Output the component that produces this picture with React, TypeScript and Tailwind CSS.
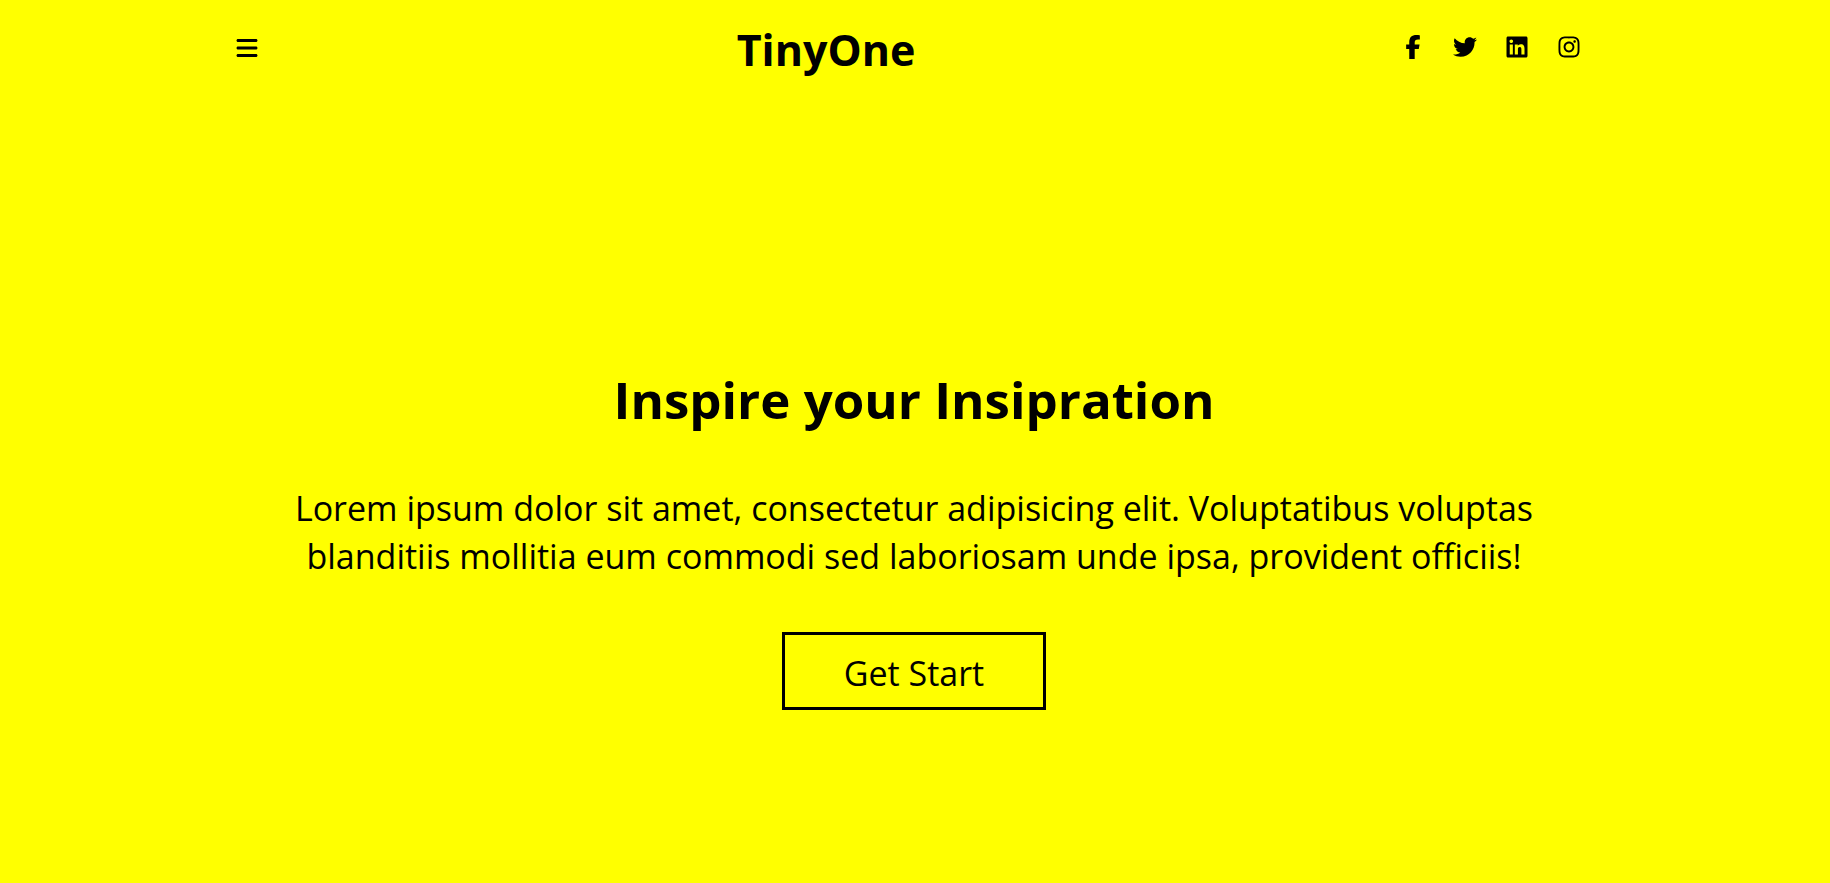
import { FaBars, FaFacebookF, FaTwitter, FaLinkedin, FaInstagram } from "react-icons/fa6";

const socials = [
  { label: "Facebook", Icon: FaFacebookF },
  { label: "Twitter", Icon: FaTwitter },
  { label: "LinkedIn", Icon: FaLinkedin },
  { label: "Instagram", Icon: FaInstagram },
];

export default function App() {
  return (
    <div className="flex min-h-screen flex-col bg-[#ffff00] font-['Open_Sans','Noto_Sans',sans-serif] text-black">
      <header className="mx-auto flex w-3/4 items-start justify-between pt-5 pr-5 pl-1.5">
        <button type="button" aria-label="Menu" className="pt-4">
          <FaBars className="size-6" />
        </button>
        <a href="#" className="text-[43px] leading-[60px] font-bold">TinyOne</a>
        <nav aria-label="Social" className="flex gap-7 pt-[15px] pl-2">
          {socials.map(({ label, Icon }) => (
            <a key={label} href="#" aria-label={label}>
              <Icon className="size-6" />
            </a>
          ))}
        </nav>
      </header>
      <main className="mx-auto flex w-3/4 flex-col items-center pt-71 pr-12 pl-[46px] text-center">
        <h1 className="text-[51px] leading-[70px] font-bold">Inspire your Insipration</h1>
        <p className="mt-[50px] text-[34px] leading-12 font-normal">
          Lorem ipsum dolor sit amet, consectetur adipisicing elit. Voluptatibus voluptas blanditiis mollitia eum commodi sed laboriosam unde ipsa, provident officiis!
        </p>
        <button type="button" className="mt-13 border-3 border-black px-[59px] pt-3.5 pb-2.5 text-[34px] leading-12">
          Get Start
        </button>
      </main>
    </div>
  );
}
